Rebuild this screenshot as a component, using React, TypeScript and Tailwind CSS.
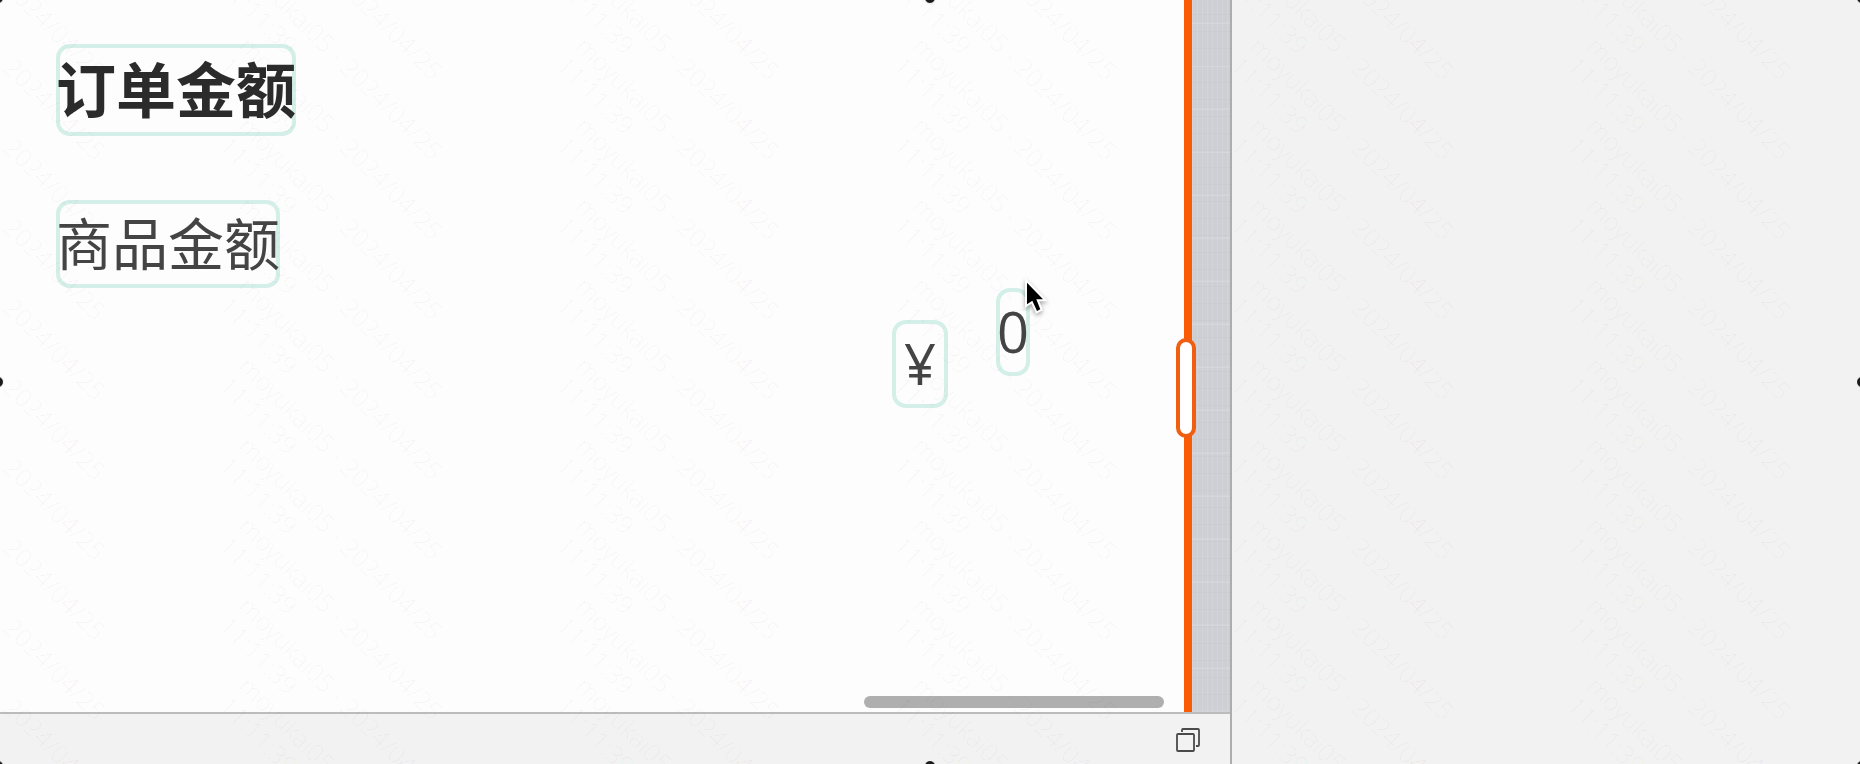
const columns = [-94, 243, 580, 917, 1254, 1591];
const rows = [-198, -118, -38, 42, 122, 202, 282, 362, 442, 522, 602, 682];

function Watermark() {
  return (
    <svg
      aria-hidden="true"
      className="pointer-events-none absolute inset-0 size-full fill-black/4 font-['Open_Sans',sans-serif] text-[25px] font-light"
    >
      {columns.map((x) =>
        rows.map((y) => (
          <g key={`${x}:${y}`} transform={`translate(${x} ${y}) rotate(45)`}>
            <text x="0" y="8">moyukai05 - 2024/04/25</text>
            <text x="0" y="36">11:11:39</text>
          </g>
        )),
      )}
    </svg>
  );
}

function SelectionDot({ className }: { className: string }) {
  return <span className={`absolute size-3 rounded-full border border-white bg-[#1c1c1c] ${className}`} />;
}

function Cursor() {
  return (
    <svg
      aria-hidden="true"
      viewBox="0 0 24 36"
      className="absolute -top-2 left-7 h-9 w-6 overflow-visible drop-shadow-[0_2px_2px_rgba(0,0,0,0.35)]"
    >
      <path
        d="M3 2.700V24.300L8.300 20.700L13 31L16.300 29.300L12.300 19.300H19Z"
        fill="#000"
        stroke="#fff"
        strokeWidth="4"
        paintOrder="stroke"
      />
    </svg>
  );
}

const field = "rounded-[14px] ring-4 ring-inset ring-[#d3efe7]";

export default function App() {
  return (
    <div className="relative flex h-screen overflow-hidden bg-[#f2f2f2] font-['Noto_Sans_CJK_SC',sans-serif]">
      <section className="flex flex-[1230_1_0%] flex-col border-r-2 border-[#adadad]">
        <div className="flex min-h-0 flex-1 border-b-2 border-[#bcbcbc]">
          <main className="flex min-w-0 flex-1 flex-col bg-[#fdfdfd]">
            <div className="flex flex-col items-start gap-16 pt-11 pl-14">
              <h1 className={`${field} pb-1.5 text-[60px] leading-[86px] font-bold text-[#2b2b2b]`}>订单金额</h1>
              <h2 className={`${field} pb-1.5 text-[56px] leading-[82px] text-[#444]`}>商品金额</h2>
            </div>
            <div className="flex items-start justify-end gap-12 pr-[154px] font-['Open_Sans',sans-serif] text-[56px] leading-[86px] text-[#444]">
              <span className={`${field} mt-8 w-14 pb-0.5 text-center`}>¥</span>
              <span className={`${field} relative min-w-[34px] pb-0.5 text-center`}>
                0
                <Cursor />
              </span>
            </div>
            <div className="mt-auto flex justify-end pr-5 pb-1">
              <div className="h-3 w-[300px] rounded-full bg-[#afafaf]" />
            </div>
          </main>
          <div className="relative w-2 bg-[#fa5b05]">
            <button
              aria-label="调整宽度"
              className="absolute top-[338px] -left-2 h-[100px] w-5 rounded-full border-4 border-[#f05e12] bg-white"
            />
          </div>
          <div className="w-[38px] bg-[#cdcfd4] bg-[repeating-linear-gradient(90deg,rgba(255,255,255,0.1)_0_1px,transparent_1px_5px),repeating-linear-gradient(0deg,rgba(0,0,0,0.02)_0_1px,transparent_1px_17px),repeating-linear-gradient(0deg,rgba(255,255,255,0.15)_0_1px,transparent_2px_43px)]" />
        </div>
        <footer className="flex h-[50px] items-start justify-end pt-3.5 pr-[30px]">
          <button aria-label="窗口">
            <svg viewBox="0 0 24 24" className="size-6" fill="none" stroke="#4a4a4a" strokeWidth="1.8">
              <rect x="1" y="6" width="17" height="17" rx="1" />
              <path d="M6 4V2q0-1 1-1h15q1 0 1 1v15q0 1-1 1h-2" />
            </svg>
          </button>
        </footer>
      </section>
      <aside className="flex-[628_1_0%]" />
      <Watermark />
      <SelectionDot className="-top-2 -left-2" />
      <SelectionDot className="-top-2 left-1/2 -translate-x-1/2" />
      <SelectionDot className="-top-2 -right-2" />
      <SelectionDot className="top-1/2 -left-2 -translate-y-1/2" />
      <SelectionDot className="top-1/2 -right-2 -translate-y-1/2" />
      <SelectionDot className="-bottom-2 -left-2" />
      <SelectionDot className="-bottom-2 left-1/2 -translate-x-1/2" />
      <SelectionDot className="-right-2 -bottom-2" />
    </div>
  );
}
